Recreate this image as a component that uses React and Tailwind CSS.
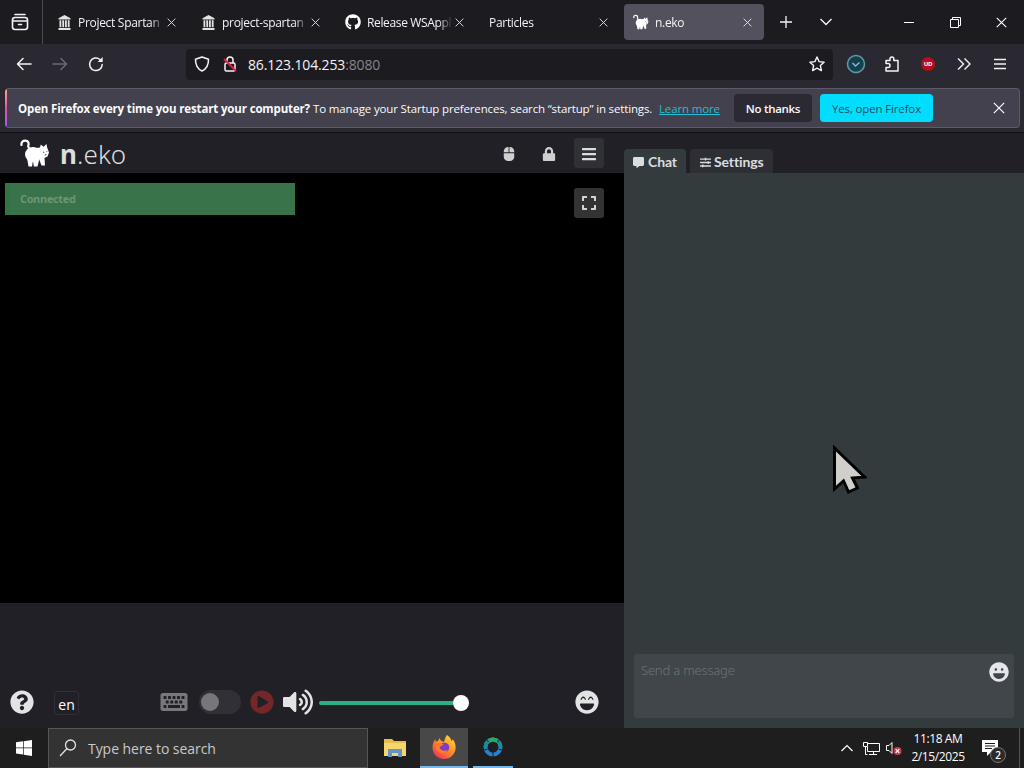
import React from 'react'
import {
  FaMouse, FaLock, FaBars, FaExpand, FaCommentAlt, FaSlidersH, FaQuestionCircle,
  FaKeyboard, FaPlayCircle, FaVolumeUp, FaLaughBeam, FaLaugh, FaGithub,
} from 'react-icons/fa'

const tabs = [
  { title: 'Project Spartan', icon: 'archive', spacing: 'tracking-[-0.3px]' },
  { title: 'project-spartan', icon: 'archive', spacing: 'tracking-[-0.3px]' },
  { title: 'Release WSAppl', icon: 'github', spacing: 'tracking-[-0.35px]' },
  { title: 'Particles', icon: null, spacing: 'tracking-[-0.3px]' },
  { title: 'n.eko', icon: 'cat', spacing: 'tracking-[-0.3px]', active: true },
]

function Cat({ className }) {
  return (
    <svg viewBox="0 0 30 28" className={className} fill="currentColor">
      <path d="M1.500 6C1 3 3 1.600 5.200 1.600 8.500 1.600 9 4.500 8.300 6.500 8 8 8.500 9 10 10" fill="none" stroke="currentColor" strokeWidth="2.200" strokeLinecap="round" />
      <ellipse cx="13" cy="15.500" rx="8" ry="7.500" />
      <path d="M7 19l1.500 8.500H12l1-6 .8 6h3.700l2-8z" />
      <path d="M16 9l4-.5.8-3 2.700 2.200L26.500 5l.8 4 1.700 4.500-1.500 4-3 1.500.5 7.500h-3.500L19 20z" />
      <path d="M23 13l1.200.4M26.500 12.500l.8-.2M24.800 16l1.500-.4" stroke="#212026" strokeWidth=".9" />
    </svg>
  )
}

function Archive({ className }) {
  return (
    <svg viewBox="0 0 13 15" className={className} fill="currentColor">
      <path d="M.5 3.300L6.500 0l6 3.300V4.500H.5zM1.500 5.300h1.800v7H1.500zM4.300 5.300h1.800v7H4.300zM7 5.300h1.800v7H7zM9.800 5.300h1.800v7H9.800zM.5 13h12v2H.5z" />
    </svg>
  )
}

function Close({ className }) {
  return (
    <svg viewBox="0 0 10 10" className={className} fill="none" stroke="currentColor">
      <path d="M.7.7l8.600 8.600M9.300.7L.7 9.300" />
    </svg>
  )
}

function Tab({ tab }) {
  return (
    <div className={`flex h-9 w-[140px] shrink-0 items-center rounded pl-[9px] ${tab.active ? 'bg-[#53515d]' : ''}`}>
      {tab.icon === 'archive' && <Archive className="mr-[7px] ml-px h-[15px] w-[13px] shrink-0 text-[#e2e2e2]" />}
      {tab.icon === 'github' && <FaGithub className="mr-1.5 h-4 w-4 shrink-0 text-white" />}
      {tab.icon === 'cat' && <Cat className="mr-1.5 h-4 w-4 shrink-0 text-white" />}
      <span className={`flex-1 pt-0.5 text-[12px] whitespace-nowrap text-[#f3f3f6] [mask-image:linear-gradient(to_right,black_85%,transparent_102%)] ${tab.spacing}`}>{tab.title}</span>
      <Close className="mr-3 ml-1 h-[9px] w-[9px] shrink-0 text-[#e9e9ed]" />
    </div>
  )
}

function TabBar() {
  return (
    <div className="flex h-11 items-center bg-[#1c1b20]">
      <div className="mr-[5px] flex h-11 w-[43px] items-center justify-center border-r border-[#4b4a52] pr-0.5">
        <svg viewBox="0 0 18 18" className="h-[18px] w-[18px]" fill="none" stroke="#f4f4f6" strokeWidth="1.600" strokeLinecap="round">
          <path d="M4 1.500h10" />
          <rect x="1.500" y="4.500" width="15" height="12" rx="2.500" />
          <path d="M2 8h14M7.500 11.500h3" />
        </svg>
      </div>
      <div className="flex gap-1">
        {tabs.map((tab) => <Tab key={tab.title} tab={tab} />)}
      </div>
      <div className="ml-[2px] flex w-10 justify-center">
        <svg viewBox="0 0 12 12" className="h-3 w-3" stroke="#f4f4f6" strokeWidth="1.300"><path d="M6 0v12M0 6h12" /></svg>
      </div>
      <div className="flex w-10 justify-center">
        <svg viewBox="0 0 12 8" className="h-2 w-3" fill="none" stroke="#f4f4f6" strokeWidth="1.400"><path d="M.5 1L6 6.500 11.500 1" /></svg>
      </div>
      <div className="ml-auto flex text-white">
        <div className="flex h-11 w-[46px] items-center justify-center"><div className="h-px w-2.5 bg-white" /></div>
        <div className="flex h-11 w-[46px] items-center justify-center">
          <svg viewBox="0 0 11 11" className="h-[11px] w-[11px]" fill="none" stroke="currentColor"><path d="M.5 2.500h8v8h-8zM2.500 2.500v-2h8v8h-2" /></svg>
        </div>
        <div className="flex h-11 w-[46px] items-center justify-center"><Close className="h-[11px] w-[11px]" /></div>
      </div>
    </div>
  )
}

function NavBar() {
  return (
    <div className="flex h-[43px] items-center bg-[#2a2931] pb-[3px] text-[#f4f4f6]">
      <div className="ml-1.5 flex w-[180px]">
        <div className="flex w-9 justify-center">
          <svg viewBox="0 0 16 16" className="h-4 w-4" fill="none" stroke="currentColor" strokeWidth="1.500" strokeLinecap="round" strokeLinejoin="round"><path d="M15 8H1.500M7 2.500L1.500 8 7 13.500" /></svg>
        </div>
        <div className="flex w-9 justify-center text-[#6b6a72]">
          <svg viewBox="0 0 16 16" className="h-4 w-4" fill="none" stroke="currentColor" strokeWidth="1.500" strokeLinecap="round" strokeLinejoin="round"><path d="M1 8h13.500M9 2.500L14.500 8 9 13.500" /></svg>
        </div>
        <div className="flex w-9 justify-center">
          <svg viewBox="0 0 16 16" className="h-4 w-4" fill="none" stroke="currentColor" strokeWidth="1.500" strokeLinecap="round"><path d="M14.200 8.500A6.300 6.300 0 1 1 12 3.500" /><path d="M14.700 1v5H9.700z" fill="currentColor" stroke="none" /></svg>
        </div>
      </div>
      <div className="flex h-[31px] w-[647px] items-center rounded bg-[#1c1b20] pl-2">
        <svg viewBox="0 0 16 16" className="h-4 w-4" fill="none" stroke="currentColor" strokeWidth="1.500" strokeLinejoin="round"><path d="M8 1l6.500 2.300C14.600 9 12.500 13 8 15 3.500 13 1.400 9 1.500 3.300z" /></svg>
        <svg viewBox="0 0 16 16" className="ml-3 h-4 w-4" fill="none" stroke="currentColor" strokeWidth="1.500">
          <path d="M5 7V4a3 3 0 0 1 6 0v3" />
          <rect x="3" y="7" width="10" height="8" rx="1.500" />
          <path d="M2 3l12 12" stroke="#d8264f" strokeWidth="2" />
        </svg>
        <span className="ml-2.5 text-[14px] tracking-[-0.14px]">86.123.104.253<span className="text-[#86858d]">:8080</span></span>
        <svg viewBox="0 0 16 16" className="mr-2 ml-auto h-4 w-4" fill="none" stroke="currentColor" strokeWidth="1.400" strokeLinejoin="round"><path d="M8 1l2.100 4.600 5 .6-3.700 3.400 1 5L8 12.100l-4.400 2.500 1-5L.9 6.200l5-.6z" /></svg>
      </div>
      <div className="ml-[5px] flex items-center">
        <div className="flex w-9 justify-center">
          <svg viewBox="0 0 20 20" className="h-5 w-5" fill="#183f50" stroke="#5f9cab" strokeWidth="1.500"><circle cx="10" cy="10" r="8.500" /><path d="M6.500 9l3 3L13.500 8.500" fill="none" stroke="#76c0d0" /></svg>
        </div>
        <div className="flex w-9 justify-center">
          <svg viewBox="0 0 16 16" className="h-4 w-4" fill="none" stroke="currentColor" strokeWidth="1.500" strokeLinejoin="round"><path d="M2 7V4.500h4V3a1.900 1.900 0 0 1 3.800 0v1.500H14V15H2v-3.500h2a2 2 0 0 0 0-4H2z" /></svg>
        </div>
        <div className="flex w-9 justify-center">
          <div className="flex h-3.5 w-3.5 items-center justify-center rounded-full bg-[#b30e19] text-[6px] font-bold tracking-[-0.2px] text-white">UD</div>
        </div>
        <div className="flex w-9 justify-center">
          <svg viewBox="0 0 14 12" className="h-3 w-3.5" fill="none" stroke="currentColor" strokeWidth="1.400"><path d="M1 .5L6.500 6 1 11.500M7.500.5L13 6l-5.500 5.500" /></svg>
        </div>
        <div className="flex w-9 justify-center">
          <svg viewBox="0 0 12 12" className="h-3 w-3" stroke="currentColor" strokeWidth="1.400"><path d="M0 1.500h12M0 6h12M0 10.500h12" /></svg>
        </div>
      </div>
    </div>
  )
}

function RestartBanner() {
  return (
    <div className="h-[46px] border-b border-[#0f0f13] bg-[#2a2931] pt-px pr-1 pl-[5px]">
      <div className="flex h-10 items-center overflow-hidden rounded border border-l-0 border-[#5b5a65] bg-[#42414d] text-[11.5px] whitespace-nowrap text-[#fbfbfe]">
        <div className="h-10 w-0.5 shrink-0 bg-gradient-to-b from-[#ffb08a] via-[#e34fa0] to-[#9059ff]" />
        <span className="ml-[11px] w-[295px] pt-0.5 font-bold tracking-[-0.15px]">Open Firefox every time you restart your computer?</span>
        <span className="w-[346px] pt-0.5 tracking-[-0.15px]">To manage your Startup preferences, search “startup” in settings.</span>
        <span className="w-[75px] pt-0.5 tracking-[-0.15px] text-[#1cbfd4] underline">Learn more</span>
        <div className="flex h-7 w-[78px] items-center justify-center rounded bg-[#2b2a33] pt-0.5 font-semibold tracking-[-0.3px]">No thanks</div>
        <div className="ml-2 flex h-7 w-[113px] items-center justify-center rounded bg-[#00ddff] pt-0.5 tracking-[-0.15px] text-[#2b4a58]">Yes, open Firefox</div>
        <Close className="mr-[14px] ml-auto h-3 w-3" />
      </div>
    </div>
  )
}

function VideoPane() {
  return (
    <div className="flex w-[624px] flex-col bg-[#212026]">
      <div className="flex h-10 items-center pl-5 text-[#dcddde]">
        <Cat className="h-7 w-[30px] text-white" />
        <span className="ml-2.5 pt-0.5 font-['Noto_Sans'] text-[26px] leading-10 font-light tracking-[0.1px]"><b className="font-bold">n</b>.eko</span>
        <div className="ml-auto flex pr-5 text-[#cfcfd1]">
          <div className="flex h-[30px] w-[30px] items-center justify-center pt-0.5"><FaMouse className="h-3.5" /></div>
          <div className="ml-2.5 flex h-[30px] w-[30px] items-center justify-center pt-0.5"><FaLock className="h-3.5" /></div>
          <div className="ml-2.5 flex h-[30px] w-[30px] items-center justify-center rounded-[3px] bg-[#2f3136] pt-0.5 text-[#dcddde]"><FaBars className="h-4" /></div>
        </div>
      </div>
      <div className="flex h-[430px] items-start justify-between bg-black pt-2.5 pr-5 pl-[5px]">
        <div className="h-8 w-[290px] border-l-[5px] border-[#317543] bg-[#387349] pt-2 pl-2.5 text-[11px] leading-4 font-bold tracking-[-0.35px] text-[#6f9577]">Connected</div>
        <div className="mt-[5px] flex h-[30px] w-[30px] items-center justify-center rounded-[3px] bg-[#333333] text-[#d5d5d5]"><FaExpand className="h-4 w-4" /></div>
      </div>
      <div className="mt-auto flex h-[51px] items-center px-2.5 pb-0.5">
        <FaQuestionCircle className="h-6 w-6 text-[#e2e3e4]" />
        <div className="mt-[3px] ml-5 flex h-6 w-[25px] items-center justify-center rounded-[3px] border border-[#303036] pt-0.5 text-[14px] text-white">en</div>
        <FaKeyboard className="ml-[81px] h-6 w-7 text-[#77787c]" />
        <div className="mt-px ml-[11px] flex h-6 w-[42px] items-center rounded-full bg-[#303036] pl-[2px]"><div className="h-[18px] w-[18px] rounded-full bg-[#77777b]" /></div>
        <FaPlayCircle className="ml-[9px] h-6 w-6 text-[#752629]" />
        <FaVolumeUp className="mt-px ml-[9px] h-7 w-[30px] text-[#e2e3e4]" />
        <div className="mt-0.5 ml-1.5 flex h-4 w-[150px] items-center"><div className="h-1 flex-1 rounded-l bg-[#2ab084]" /><div className="h-4 w-4 rounded-full bg-white" /></div>
        <FaLaughBeam className="mr-[15px] ml-auto h-6 w-6 text-[#e2e3e4]" />
      </div>
    </div>
  )
}

function ChatPane() {
  return (
    <div className="flex w-[400px] flex-col bg-[#212026]">
      <div className="flex h-10 items-end gap-1 font-['Lato'] text-[14px] font-bold tracking-[-0.1px] text-[#dcddde]">
        <div className="flex h-6 w-[62px] items-center rounded-t bg-[#343b3e] pl-[9px]"><FaCommentAlt className="mt-0.5 mr-1 h-[11px] w-[11px]" />Chat</div>
        <div className="flex h-6 w-[83px] items-center rounded-t bg-[#2d2f34] pl-2.5"><FaSlidersH className="mt-0.5 mr-[3px] h-[11px] w-[11px]" />Settings</div>
      </div>
      <div className="flex flex-1 flex-col justify-end bg-[#343b3d] px-2.5 pb-2.5">
        <div className="flex h-16 justify-between rounded-[3px] bg-[#41464b] pt-2 pr-[5px] pl-[7px]">
          <span className="font-['Noto_Sans'] text-[13px] leading-[17px] font-light tracking-[-0.2px] text-[#6d7277]">Send a message</span>
          <FaLaugh className="h-5 w-5 text-[#e5e5ee]" />
        </div>
      </div>
    </div>
  )
}

function Taskbar() {
  return (
    <div className="flex h-10 bg-[#1e1e1e] text-white">
      <div className="flex w-12 items-center justify-center">
        <svg viewBox="0 0 16 16" className="h-4 w-4" fill="currentColor"><path d="M0 2.300L7 1.300v6.300H0zM7.700 1.200L16 0v7.600H7.700zM0 8.300h7v6.300l-7-1zM7.700 8.300H16V16l-8.300-1.200z" /></svg>
      </div>
      <div className="flex w-80 items-center border border-[#575757] bg-[#333333] pl-2.5 text-[#c9c9c9]">
        <svg viewBox="0 0 18 18" className="mr-[11px] h-[18px] w-[18px]" fill="none" stroke="#e4e4e4" strokeWidth="1.300"><circle cx="11.500" cy="6" r="5" /><path d="M8 9.500L1 17" /></svg>
        <span className="text-[14px] tracking-[-0.05px]">Type here to search</span>
      </div>
      <div className="ml-1 flex w-12 items-center justify-center pr-[3px]">
        <svg viewBox="0 0 22 18" className="h-[18px] w-[22px]">
          <path d="M0 0h8l2 2h12v15H0z" fill="#e6bd49" />
          <path d="M0 4h22v13H0z" fill="#f5d66c" />
          <path d="M4 18v-8h14v8h-4v-4H8v4z" fill="#6494c6" />
        </svg>
      </div>
      <div className="flex w-12 items-center justify-center border-b-2 border-[#76b9ed] bg-[#484848]">
        <svg viewBox="0 0 24 24" className="h-6 w-6">
          <defs>
            <linearGradient id="fox" x1="1" y1="0" x2="0.200" y2="1"><stop offset="0" stopColor="#ffe44a" /><stop offset=".5" stopColor="#ff9325" /><stop offset="1" stopColor="#f52c5e" /></linearGradient>
          </defs>
          <path d="M15 0c3 2 4 4 4.500 6 1-.5 1-1.500 1-2C23 7 24 10 23.500 14 22.500 20 18 24 12 24 5.500 24 .5 19 .5 12.500c0-4 1.500-6.500 3-8.500v2.500L6 6l1.500-3c.5 2 2 3 4.500 4 .5-3 1.500-5 3-7z" fill="url(#fox)" />
          <circle cx="12.500" cy="12.500" r="4.800" fill="#7b3fc5" />
          <path d="M4 9c3-2 6-1 8 1-3 0-3 2-5 2 1 3 5 5 9 3-3 5-10 4-12-1z" fill="#ff7a2c" />
        </svg>
      </div>
      <div className="ml-[5px] flex w-10 items-center justify-center border-b-2 border-[#76b9ed]">
        <svg viewBox="0 0 20 20" className="h-5 w-5" fill="none" strokeWidth="4">
          <circle cx="10" cy="10" r="7.500" stroke="#2382d2" />
          <path d="M2.500 10a7.500 7.500 0 0 1 15 0" stroke="#1b8f90" />
          <path d="M6 3.700a7.500 7.500 0 0 1 8 0" stroke="#32a660" />
          <path d="M5.500 5L3 2M14.500 5L17 2M4.500 12L0 13.500M15.500 12l4.500 1.500M10 15v5" stroke="#1e1e1e" strokeWidth="1" />
        </svg>
      </div>
      <div className="ml-auto flex items-center">
        <svg viewBox="0 0 12 8" className="h-2 w-3" fill="none" stroke="white" strokeWidth="1.200"><path d="M.5 7L6 1.500 11.500 7" /></svg>
        <svg viewBox="0 0 17 15" className="ml-2.5 h-[15px] w-[17px]" fill="none" stroke="white"><path d="M5 2.500h11.500v8H4.500V6M10.500 10.500v3M6 13.500h8M.5 1.500h4v4h-4zM2.500 5.500v8h2" /></svg>
        <svg viewBox="0 0 16 14" className="ml-1.5 h-3.5 w-4" fill="none" stroke="white"><path d="M.5 4.500H3L6 1.500v11L3 9.500H.5z" /><circle cx="11.500" cy="10" r="4" fill="#d13848" stroke="none" /><path d="M9.700 8.200l3.600 3.600M13.300 8.200l-3.600 3.600" strokeWidth="1.200" /></svg>
        <div className="ml-2 w-[56px] text-center text-[12px] leading-[18px] tracking-[-0.4px] whitespace-nowrap">
          <div>11:18 AM</div>
          <div>2/15/2025</div>
        </div>
        <div className="relative ml-4 h-10 w-6">
          <svg viewBox="0 0 16 16" className="mt-3 h-4 w-4"><path d="M0 0h16v12H9l-4 4v-4H0z" fill="white" /><path d="M3 3.500h10M3 6h10M3 8.500h7" stroke="#1e1e1e" /></svg>
          <div className="absolute top-[19px] left-2 flex h-4 w-4 items-center justify-center rounded-full border border-[#777777] bg-[#2b2b2b] text-[10px] font-semibold">2</div>
        </div>
        <div className="ml-[13px] h-10 w-[5px] border-l border-[#555555]" />
      </div>
    </div>
  )
}

export default function App() {
  return (
    <div className="relative flex h-[768px] w-[1024px] flex-col overflow-hidden bg-[#212026] font-['Open_Sans',sans-serif]">
      <TabBar />
      <NavBar />
      <RestartBanner />
      <div className="flex h-[595px]">
        <VideoPane />
        <ChatPane />
      </div>
      <Taskbar />
      {/* mouse pointer */}
      <svg viewBox="0 0 35 51" className="absolute top-[444px] left-[832px] h-[51px] w-[35px]">
        <path d="M2.500 4v41l9-8 5 11 9-4-5-10 12-1z" fill="#cfcfcb" stroke="black" strokeWidth="3" />
      </svg>
    </div>
  )
}
